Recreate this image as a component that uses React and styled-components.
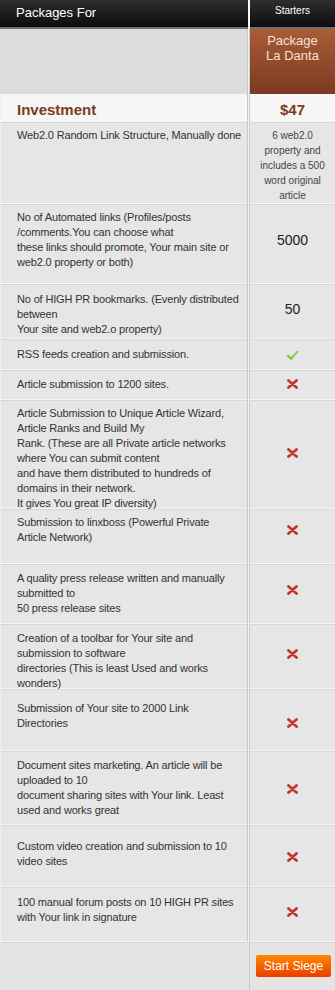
import React from "react";
import styled, { createGlobalStyle } from "styled-components";

const GlobalStyle = createGlobalStyle`
  body {
    margin: 0;
    background: #e4e4e4;
    font-family: "Liberation Sans", Arial, sans-serif;
  }
`;

const Table = styled.div`
  width: 335px;
  background: #e4e4e4;
`;

const HeaderRow = styled.div`
  display: flex;
  gap: 2px;
  height: 29px;
  background: #f6f6f6;
`;

const HeadCell = styled.div`
  box-sizing: border-box;
  width: ${(p) => (p.$wide ? "248px" : "auto")};
  flex: ${(p) => (p.$wide ? "none" : "1")};
  background: linear-gradient(#2e2e2e, #0c0c0c);
  border-bottom: 2px solid #707070;
  color: #fff;
  font-size: ${(p) => (p.$wide ? "13px" : "10px")};
  text-align: ${(p) => (p.$wide ? "left" : "center")};
  padding: ${(p) => (p.$wide ? "5px 0 0 16px" : "5px 0 0")};
`;

const Row = styled.div`
  display: flex;
  gap: 1px;
  height: ${(p) => p.$h}px;
  background: #f4f4f4;
`;

const FeatureCell = styled.div`
  box-sizing: border-box;
  width: 248px;
  flex: none;
  background: ${(p) => p.$bg || "#e6e6e6"};
  border-right: 1px solid #c9c9c9;
  border-bottom: ${(p) => (p.$plain ? "none" : "1px solid #d6d6d6")};
  box-shadow: ${(p) => (p.$plain ? "none" : "inset 0 -1px 0 #f6f6f6, inset 1px 0 0 #f0f0f0")};
  padding: ${(p) => p.$pt ?? 5}px 4px 0 17px;
  color: #333;
  font-size: 11px;
  letter-spacing: -0.16px;
  line-height: 15px;
  white-space: nowrap;
  overflow: hidden;
`;

const ValueCell = styled.div`
  box-sizing: border-box;
  flex: 1;
  display: flex;
  align-items: center;
  justify-content: center;
  text-align: center;
  background: ${(p) => p.$bg || "#e6e6e6"};
  border-left: 1px solid #c9c9c9;
  border-bottom: 1px solid #d6d6d6;
  box-shadow: inset 0 -1px 0 #f6f6f6;
  padding-top: ${(p) => Math.max(0, 2 * (p.$shift || 0))}px;
  padding-bottom: ${(p) => Math.max(0, -2 * (p.$shift || 0))}px;
`;

const PackageCell = styled.div`
  box-sizing: border-box;
  flex: 1;
  background: linear-gradient(#a95c38, #7a3a21);
  border-left: 1px solid #c9c9c9;
  color: #f6e2d2;
  font-size: 13px;
  line-height: 15px;
  text-align: center;
  padding-top: 4px;
`;

const Investment = styled.span`
  font-size: 15px;
  font-weight: bold;
  letter-spacing: 0;
  color: #7b3b20;
  line-height: 18px;
`;

const Note = styled.div`
  font-size: 10px;
  line-height: 15px;
  color: #444;
  padding: 0 4px;
`;

const BigValue = styled.span`
  font-size: 14px;
  color: #222;
`;

const Footer = styled.div`
  display: flex;
  height: 47px;
  background: #e4e4e4;
`;

const FooterSpace = styled.div`
  width: 249px;
  flex: none;
`;

const FooterRight = styled.div`
  flex: 1;
  border-left: 1px solid #c9c9c9;
  padding: 12px 0 0 6px;
`;

const SiegeButton = styled.button`
  width: 75px;
  height: 22px;
  border: none;
  border-radius: 2px;
  background: linear-gradient(#ff8a00, #e93c00);
  color: #fff;
  font-family: "Liberation Sans", Arial, sans-serif;
  font-size: 12px;
  padding: 0;
  cursor: pointer;
`;

const Check = () => (
  <svg width="13" height="11" viewBox="0 0 13 11">
    <path d="M0.5 6 L2.5 4.5 L5 7 L11.5 0.5 L12.5 1.5 L5 10.5 Z" fill="#8cc43c" />
  </svg>
);

const Cross = () => (
  <svg width="11" height="10" viewBox="0 0 11 10">
    <path d="M1.5 1.5 L9.5 8.5 M9.5 1.5 L1.5 8.5" stroke="#c4342a" strokeWidth="2.8" strokeLinecap="round" />
  </svg>
);

const rows = [
  { h: 82, pt: 5, text: ["Web2.0 Random Link Structure, Manually done"], note: ["6 web2.0", "property and", "includes a 500", "word original", "article"], shift: 1.5 },
  { h: 80, pt: 5, text: ["No of Automated links (Profiles/posts", "/comments.You can choose what", "these links should promote, Your main site or", "web2.0 property or both)"], value: "5000", shift: -4.5 },
  { h: 55, pt: 7, text: ["No of HIGH PR bookmarks. (Evenly distributed", "between", "Your site and web2.o property)"], value: "50", shift: -3 },
  { h: 31, pt: 7, text: ["RSS feeds creation and submission."], icon: "check" },
  { h: 30, pt: 6, text: ["Article submission to 1200 sites."], icon: "cross", shift: -1.5 },
  { h: 109, pt: 5, text: ["Article Submission to Unique Article Wizard,", "Article Ranks and Build My", "Rank. (These are all Private article networks", "where You can submit content", "and have them distributed to hundreds of", "domains in their network.", "It gives You great IP diversity)"], icon: "cross", shift: -2 },
  { h: 55, pt: 5, text: ["Submission to linxboss (Powerful Private", "Article Network)"], icon: "cross", shift: -7 },
  { h: 60, pt: 6, text: ["A quality press release written and manually", "submitted to", "50 press release sites"], icon: "cross", shift: -5 },
  { h: 65, pt: 6, text: ["Creation of a toolbar for Your site and", "submission to software", "directories (This is least Used and works", "wonders)"], icon: "cross", shift: -3.5 },
  { h: 62, pt: 11, text: ["Submission of Your site to 2000 Link", "Directories"], icon: "cross", shift: 2 },
  { h: 74, pt: 6, text: ["Document sites marketing. An article will be", "uploaded to 10", "document sharing sites with Your link. Least", "used and works great"], icon: "cross" },
  { h: 62, pt: 13, text: ["Custom video creation and submission to 10", "video sites"], icon: "cross" },
  { h: 55, pt: 7, text: ["100 manual forum posts on 10 HIGH PR sites", "with Your link in signature"], icon: "cross", shift: -3.5 },
];

const Lines = ({ lines }) =>
  lines.map((l, i) => (
    <React.Fragment key={i}>
      {l}
      {i < lines.length - 1 && <br />}
    </React.Fragment>
  ));

export default function App() {
  return (
    <>
      <GlobalStyle />
      <Table>
        <HeaderRow>
          <HeadCell $wide>Packages For</HeadCell>
          <HeadCell>Starters</HeadCell>
        </HeaderRow>

        <Row $h={65}>
          <FeatureCell $bg="#dcdcdc" $plain />
          <PackageCell>
            Package
            <br />
            La Danta
          </PackageCell>
        </Row>

        <Row $h={29}>
          <FeatureCell $bg="#f6f6f6" $pt={7}>
            <Investment>Investment</Investment>
          </FeatureCell>
          <ValueCell $bg="#f6f6f6" $shift={1.5}>
            <Investment>$47</Investment>
          </ValueCell>
        </Row>

        {rows.map((r, i) => (
          <Row key={i} $h={r.h}>
            <FeatureCell $pt={r.pt}>
              <Lines lines={r.text} />
            </FeatureCell>
            <ValueCell $shift={r.shift}>
              {r.note && (
                <Note>
                  <Lines lines={r.note} />
                </Note>
              )}
              {r.value && <BigValue>{r.value}</BigValue>}
              {r.icon === "check" && <Check />}
              {r.icon === "cross" && <Cross />}
            </ValueCell>
          </Row>
        ))}

        <Footer>
          <FooterSpace />
          <FooterRight>
            <SiegeButton>Start Siege</SiegeButton>
          </FooterRight>
        </Footer>
      </Table>
    </>
  );
}
